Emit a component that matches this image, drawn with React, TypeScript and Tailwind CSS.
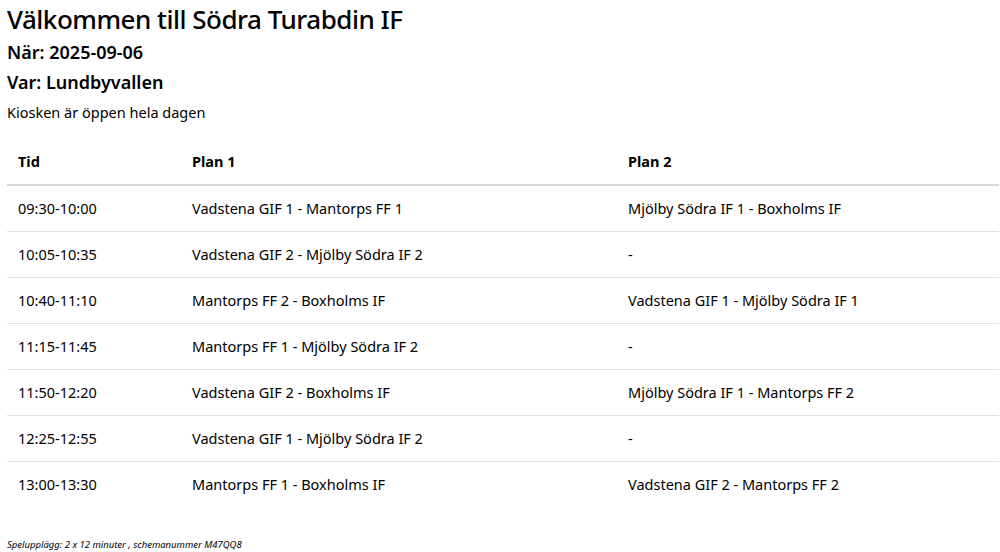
const rows = [
  ["09:30-10:00", "Vadstena GIF 1 - Mantorps FF 1", "Mjölby Södra IF 1 - Boxholms IF"],
  ["10:05-10:35", "Vadstena GIF 2 - Mjölby Södra IF 2", "-"],
  ["10:40-11:10", "Mantorps FF 2 - Boxholms IF", "Vadstena GIF 1 - Mjölby Södra IF 1"],
  ["11:15-11:45", "Mantorps FF 1 - Mjölby Södra IF 2", "-"],
  ["11:50-12:20", "Vadstena GIF 2 - Boxholms IF", "Mjölby Södra IF 1 - Mantorps FF 2"],
  ["12:25-12:55", "Vadstena GIF 1 - Mjölby Södra IF 2", "-"],
  ["13:00-13:30", "Mantorps FF 1 - Boxholms IF", "Vadstena GIF 2 - Mantorps FF 2"],
]

export default function App() {
  return (
    <div className="min-h-[552px] bg-white pl-[7px] pr-[1px] pt-[2px] font-['Noto_Sans',sans-serif] text-[#212529]">
      <h1 className="text-[26px] font-medium leading-[34px] tracking-[-0.5px] text-black">Välkommen till Södra Turabdin IF</h1>
      <h2 className="mt-[1px] text-[18px] font-semibold leading-[30px] text-black">När: 2025-09-06</h2>
      <h2 className="text-[18px] font-semibold leading-[30px] text-black">Var: Lundbyvallen</h2>
      <p className="text-[14.5px] leading-[30px] text-black">Kiosken är öppen hela dagen</p>

      <table className="mt-[12px] w-full border-collapse text-[14.5px] text-black">
        <thead>
          <tr className="border-b-2 border-[#d6d8da]">
            <th className="w-[174px] px-[11px] py-[11px] text-left font-bold leading-[23px]">Tid</th>
            <th className="w-[436px] px-[11px] py-[11px] text-left font-bold leading-[23px]">Plan 1</th>
            <th className="px-[11px] py-[11px] text-left font-bold leading-[23px]">Plan 2</th>
          </tr>
        </thead>
        <tbody>
          {rows.map((r, i) => (
            <tr key={r[0]} className={i < rows.length - 1 ? "border-b border-[#dee2e6]" : ""}>
              {r.map((c, j) => (
                <td key={j} className="px-[11px] py-[11px] leading-[23px]">{c}</td>
              ))}
            </tr>
          ))}
        </tbody>
      </table>

      <p className="mt-[32px] text-[9.5px] italic leading-[12px] text-black">Spelupplägg: 2 x 12 minuter , schemanummer M47QQ8</p>
    </div>
  )
}
